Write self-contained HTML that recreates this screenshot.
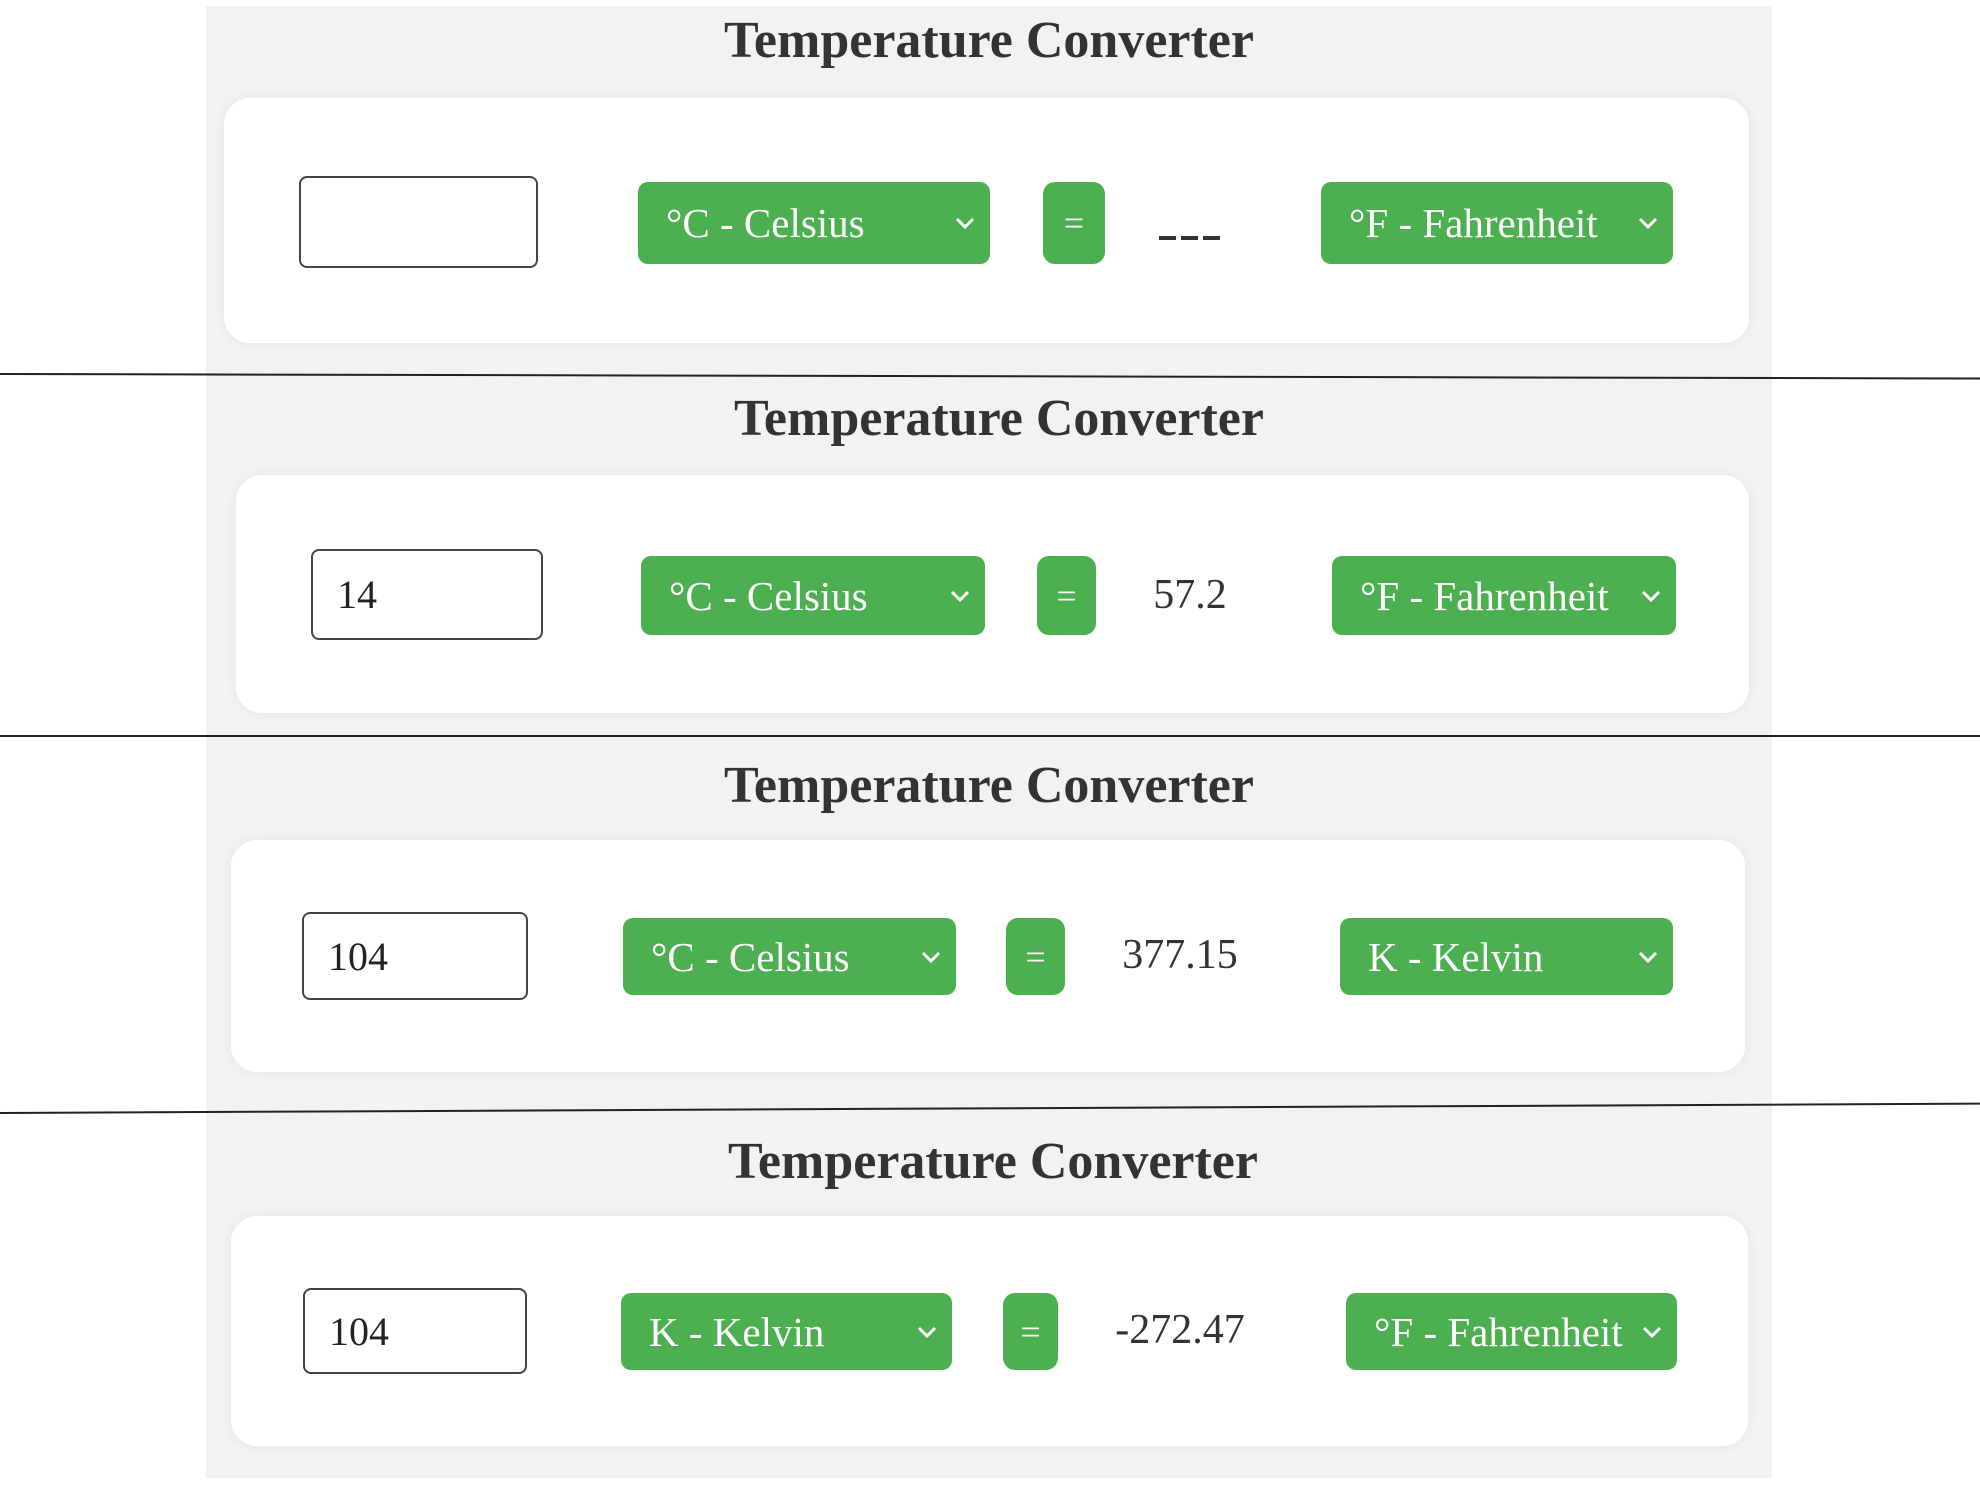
<!DOCTYPE html>
<html><head><style>
body{margin:0;width:1980px;height:1485px;background:#fff;position:relative;overflow:hidden;font-family:"Liberation Serif","DejaVu Serif",serif;}
.panel{position:absolute;left:206px;top:6px;width:1566px;height:1472px;background:#f2f2f2;}
.title{position:absolute;left:206px;width:1566px;text-align:center;font-weight:bold;font-size:52px;color:#333;line-height:1;}
.card{position:absolute;background:#fff;border-radius:26px;box-shadow:0 0 14px rgba(0,0,0,0.06);}
.inp{position:absolute;border:2px solid #444;border-radius:8px;background:#fff;font-size:40px;color:#222;padding-left:24px;display:flex;align-items:center;box-sizing:border-box;}
.sel{position:absolute;background:#4caf50;border-radius:10px;color:#fff;font-size:41px;display:flex;align-items:center;padding-left:28px;box-sizing:border-box;}
.sel svg{position:absolute;right:14px;top:50%;margin-top:-8px;}
.eq{position:absolute;background:#4caf50;border-radius:12px;color:#fff;font-size:36px;display:flex;align-items:center;justify-content:center;}
.res{position:absolute;font-size:42px;color:#333;display:flex;align-items:center;justify-content:center;}
.line{position:absolute;left:0;width:1980px;height:2px;background:#222;transform-origin:left;}
.dash{position:absolute;height:4px;width:17px;background:#333;top:236px;}
</style></head><body>
<div class="panel"></div>

<div class="title" style="top:15px;">Temperature Converter</div>
<div class="card" style="left:224px;top:98px;width:1525px;height:245px;"></div>
<div class="inp" style="left:299px;top:176px;width:239px;height:92px;"></div>
<div class="sel" style="left:638px;top:182px;width:352px;height:82px;">°C - Celsius<svg width="22" height="16" viewBox="0 0 22 16"><path d="M3 4l8 8 8-8" stroke="#fff" stroke-width="3" fill="none"/></svg></div>
<div class="eq" style="left:1043px;top:182px;width:62px;height:82px;">=</div>
<div class="dash" style="left:1159px;"></div><div class="dash" style="left:1181px;"></div><div class="dash" style="left:1203px;"></div>
<div class="sel" style="left:1321px;top:182px;width:352px;height:82px;">°F - Fahrenheit<svg width="22" height="16" viewBox="0 0 22 16"><path d="M3 4l8 8 8-8" stroke="#fff" stroke-width="3" fill="none"/></svg></div>
<div class="line" style="top:373px;transform:rotate(0.13deg);"></div>

<div class="title" style="top:393px;padding-left:10px;">Temperature Converter</div>
<div class="card" style="left:236px;top:475px;width:1513px;height:238px;"></div>
<div class="inp" style="left:311px;top:549px;width:232px;height:91px;">14</div>
<div class="sel" style="left:641px;top:556px;width:344px;height:79px;">°C - Celsius<svg width="22" height="16" viewBox="0 0 22 16"><path d="M3 4l8 8 8-8" stroke="#fff" stroke-width="3" fill="none"/></svg></div>
<div class="eq" style="left:1037px;top:556px;width:59px;height:79px;">=</div>
<div class="res" style="left:1120px;top:560px;width:140px;height:70px;">57.2</div>
<div class="sel" style="left:1332px;top:556px;width:344px;height:79px;">°F - Fahrenheit<svg width="22" height="16" viewBox="0 0 22 16"><path d="M3 4l8 8 8-8" stroke="#fff" stroke-width="3" fill="none"/></svg></div>
<div class="line" style="top:735px;"></div>

<div class="title" style="top:760px;">Temperature Converter</div>
<div class="card" style="left:231px;top:840px;width:1514px;height:232px;"></div>
<div class="inp" style="left:302px;top:912px;width:226px;height:88px;">104</div>
<div class="sel" style="left:623px;top:918px;width:333px;height:77px;">°C - Celsius<svg width="22" height="16" viewBox="0 0 22 16"><path d="M3 4l8 8 8-8" stroke="#fff" stroke-width="3" fill="none"/></svg></div>
<div class="eq" style="left:1006px;top:918px;width:59px;height:77px;">=</div>
<div class="res" style="left:1100px;top:920px;width:160px;height:70px;">377.15</div>
<div class="sel" style="left:1340px;top:918px;width:333px;height:77px;">K - Kelvin<svg width="22" height="16" viewBox="0 0 22 16"><path d="M3 4l8 8 8-8" stroke="#fff" stroke-width="3" fill="none"/></svg></div>
<div class="line" style="top:1112px;transform:rotate(-0.27deg);"></div>

<div class="title" style="top:1136px;padding-left:4px;">Temperature Converter</div>
<div class="card" style="left:231px;top:1216px;width:1517px;height:230px;"></div>
<div class="inp" style="left:303px;top:1288px;width:224px;height:86px;">104</div>
<div class="sel" style="left:621px;top:1293px;width:331px;height:77px;">K - Kelvin<svg width="22" height="16" viewBox="0 0 22 16"><path d="M3 4l8 8 8-8" stroke="#fff" stroke-width="3" fill="none"/></svg></div>
<div class="eq" style="left:1003px;top:1293px;width:55px;height:77px;">=</div>
<div class="res" style="left:1095px;top:1295px;width:170px;height:70px;">-272.47</div>
<div class="sel" style="left:1346px;top:1293px;width:331px;height:77px;">°F - Fahrenheit<svg width="22" height="16" viewBox="0 0 22 16"><path d="M3 4l8 8 8-8" stroke="#fff" stroke-width="3" fill="none"/></svg></div>
</body></html>
